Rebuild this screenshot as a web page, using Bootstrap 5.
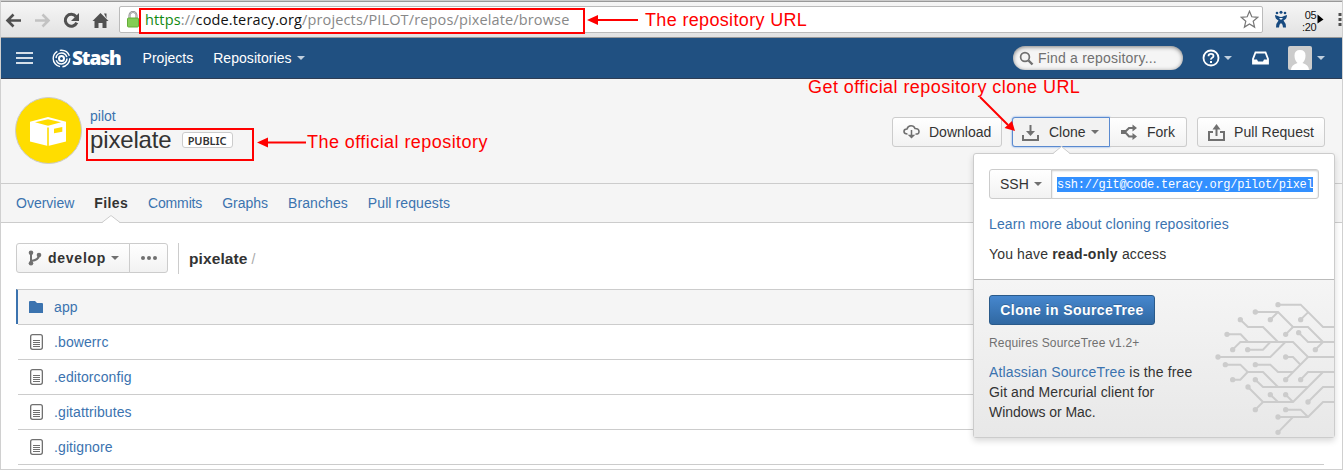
<!DOCTYPE html>
<html lang="en">
<head>
<meta charset="utf-8">
<title>pixelate - Stash</title>
<link href="https://cdn.jsdelivr.net/npm/bootstrap@5.3.0/dist/css/bootstrap.min.css" rel="stylesheet">
<style>
*{box-sizing:border-box}
body{width:1343px;height:470px;overflow:hidden;position:relative;margin:0;background:#fff;color:#333;font:14px/20px "Liberation Sans",Arial,sans-serif;border:solid #d0d0d0;border-width:0 1px 1px}
a{color:#3b73af;text-decoration:none}
svg{display:block;flex:none}
.chrome-bar{height:38px;border-top:1px solid #ccc;border-bottom:1px solid #999;background:linear-gradient(#999 1px,#f6f6f6 1px,#e2e2e2);padding:5px 0 0 4px;overflow:hidden}
.omni{flex:none;width:1144px;height:27px;border:1px solid #bbb;border-radius:2px;background:#fff;margin-left:10px;padding:0 3px 0 7px}
.omni-url{font:14.5px/24px "Open Sans","Noto Sans",sans-serif;color:#888;margin-left:6px;letter-spacing:.14px;white-space:nowrap}
.omni-url b{font-weight:400;color:#111}.omni-url i{font-style:normal;color:#128a12}
.clockx{font:11px/12px "Liberation Sans";color:#111;text-align:right;letter-spacing:-.3px;flex:none}
.stash-nav{height:41px;background:#205081;border-bottom:1px solid #2e3d54;color:#fff;padding:0 17px 0 15px}
.stash-nav a{color:#fff}
.brandword{font:800 19px/24px "Open Sans",sans-serif;letter-spacing:-1.1px}
.caret{width:0;height:0;border:4px solid transparent;border-top-color:#707070;border-bottom:0;flex:none}
.stash-nav .caret{border-top-color:#c0cfde}
.find{width:170px;height:24px;border-radius:12px;background:#f5f5f5;color:#707070;box-shadow:inset 0 1px 4px rgba(0,0,0,.5);padding-left:6px;letter-spacing:.2px}
.repo-head{height:105px;background:#f5f5f5;border-bottom:1px solid #ccc;padding:18px 17px 0 14px}
.avatar-disc{width:67px;height:67px;border-radius:50%;background:#fd0;border:1px solid #ccc;padding:19px 0 0 14px}
.repo-title{font-size:24px;line-height:28px;letter-spacing:-.15px}
.lozenge{font:600 11px/13px "Noto Sans",sans-serif;border:1px solid #ccc;border-radius:3px;background:#fff;padding:1px 0 0;width:51px;height:16px;text-align:center;letter-spacing:-.1px}
.sbtn{height:30px;border:1px solid #ccc;border-radius:3px;background:linear-gradient(#fff,#f2f2f2);color:#333;white-space:nowrap}
.tabs{height:39px;background:#f5f5f5;border-bottom:1px solid #ccc;padding-left:15px;position:relative;letter-spacing:0}
.notch{position:absolute;left:101px;top:31px}
.toolbar-row{height:66px;padding:20px 15px 0}
.tree-row{height:35px;border-top:1px solid #ccc;margin-left:17px;padding-left:12px;letter-spacing:.1px}
.tree-row.active-row{margin-left:15px;border-left:2px solid #3b73af;background:#f5f5f5}
.clonebox{position:absolute;left:972px;top:153px;width:362px;height:285px;border:1px solid #ccc;border-radius:3px;background:#fff;box-shadow:0 3px 6px rgba(0,0,0,.15)}
.clone-up{height:126px;border-bottom:1px solid #bbb;padding:15px}
.clone-low{height:157px;background:linear-gradient(#f5f5f5,#e8e8e8);padding:15px;position:relative}
.sshfield{width:268px;height:30px;border:1px solid #ccc;border-radius:0 3px 3px 0;box-shadow:inset 0 1px 2px #ccc;padding:7px 5px;overflow:hidden;margin-left:-1px}
.sshfield span{display:block;width:256px;height:15px;overflow:hidden;background:#3390ff;color:#fff;font:12px/16px "Liberation Mono",monospace;letter-spacing:-.27px;white-space:nowrap}
.primary-b{width:166px;height:30px;border:1px solid #2a5a8a;border-radius:3px;background:linear-gradient(#4687ce,#3068a2);color:#fff;font-weight:700;line-height:28px;text-align:center;letter-spacing:.42px;text-shadow:0 -1px 0 rgba(0,0,0,.2)}
.note{position:absolute;color:#f00;font-size:18px;line-height:20px;letter-spacing:.44px;white-space:nowrap}
.redbox{position:absolute;border:2px solid #f00}
.arrows{position:absolute;left:-1px;top:0;pointer-events:none}
</style>
<script src="https://cdn.jsdelivr.net/npm/bootstrap@5.3.0/dist/js/bootstrap.bundle.min.js"></script>
</head>
<body>
<svg width="0" height="0" class="position-absolute"><defs>
<g id="doc"><rect x=".65" y=".65" width="11.7" height="14.7" rx="2" fill="#fff" stroke="#707070" stroke-width="1.3"/><path d="M3 6.500h7M3 8.500h7M3 10.500h7M3 12.500h7" stroke="#707070"/></g>
</defs></svg>

<div class="chrome-bar d-flex">
  <svg width="104" height="28" viewBox="5 5 104 28"><g fill="none" stroke="#505050" stroke-width="2.6"><path d="M8 19.5h13M13.5 13.5l-6 6 6 6"/><path d="M35 19.5h13M42.500 13.500l6 6-6 6" stroke="#c2c2c2"/><path d="M76 15.500a6 6 0 1 0 .8 6.200" stroke-width="3"/></g><path d="M79 12v8h-8z" fill="#505050"/><path d="M100.500 12l8 8h-2v7h-4v-5h-4v5h-4v-7h-2zM104 12.500h2.500v5z" fill="#505050"/></svg>
  <div class="omni d-flex align-items-center">
    <svg width="12" height="17" viewBox="0 0 12 17"><path d="M2.500 8V4.500a3.500 3.500 0 0 1 7 0V8" fill="none" stroke="#888" stroke-width="2"/><path d="M2.500 8V4.500a3.500 3.500 0 0 1 7 0V8" fill="none" stroke="#ddd" stroke-width=".7"/><rect x=".5" y="7" width="11" height="9" rx="1" fill="#83cd55" stroke="#65ad3b"/></svg>
    <span class="omni-url"><i>https</i>://<b>code.teracy.org</b>/projects/PILOT/repos/pixelate/browse</span>
    <svg class="ms-auto" width="19" height="19" viewBox="0 0 19 19"><path d="M9.500 1.200l2.300 5.600 6 .5-4.600 3.900 1.400 5.900-5.100-3.200-5.100 3.200 1.400-5.900L1.200 7.300l6-.5z" fill="#fff" stroke="#777" stroke-width="1.2"/></svg>
  </div>
  <svg style="margin:4px 0 0 9px" width="18" height="20" viewBox="0 0 18 20"><g fill="#174a80"><circle cx="5" cy="3" r="1.300"/><circle cx="9" cy="2.200" r="1.500"/><circle cx="13" cy="3" r="1.300"/><path d="M3 5l3 1q3 2 6 0l3-1q0 4-3.500 5.500Q14 13 14 17.500h-3Q11 14 9 13q-2 1-2 4.500H4q0-4.500 2.500-7Q3 9 3 5z"/></g><path d="M7 8h4l-2 2z" fill="#edf3f8"/></svg>
  <div class="clockx" style="margin:3px 0 0 12px">05<br>:20</div>
  <svg width="30" height="28" viewBox="0 0 30 28"><path d="M1.500 8.500l6 5-6 4z" fill="#000"/><path d="M22.500 7h3v3h-3zM22.500 12h3v3h-3zM22.500 17h3v3h-3z" fill="#505050"/></svg>
</div>

<nav class="stash-nav d-flex align-items-center">
  <svg width="17" height="14"><path d="M0 2h17M0 7h17M0 12h17" stroke="#d5dfe9" stroke-width="2"/></svg>
  <svg width="19" height="19" viewBox="0 0 19 19" style="margin-left:19px"><g fill="none" stroke="#fff"><circle cx="9.500" cy="9.500" r="8.300" stroke-width="1.400" stroke-dasharray="12 2.500 20 2.600"/><circle cx="9.500" cy="9.500" r="5.500" stroke-width="1.500" stroke-dasharray="15 2.280"/><circle cx="9.500" cy="9.500" r="2.500" stroke-width="2"/></g></svg>
  <span class="brandword" style="margin-left:1px">Stash</span>
  <a href="#" class="projects" style="margin-left:22px">Projects</a>
  <a href="#" style="margin-left:20px;letter-spacing:.05px">Repositories</a><span class="caret" style="margin-left:5px"></span>
  <div class="find ms-auto d-flex align-items-center"><svg width="15" height="15" viewBox="0 0 15 15" style="margin-right:4px"><path d="M9.500 9.500l4 4" stroke="#707070" stroke-width="2.400"/><circle cx="6" cy="6" r="4.400" fill="none" stroke="#707070" stroke-width="1.700"/></svg>Find a repository...</div>
  <svg width="18" height="18" viewBox="0 0 18 18" style="margin-left:19px"><circle cx="9" cy="9" r="7.500" fill="none" stroke="#fff" stroke-width="1.800"/><path d="M6.500 7.200q0-2.300 2.500-2.300t2.500 2q0 1.200-1.300 1.800T9 10.600" fill="none" stroke="#fff" stroke-width="1.800"/><rect x="8" y="12" width="2" height="2" fill="#fff"/></svg>
  <span class="caret" style="margin-left:4px"></span>
  <svg width="17" height="14" viewBox="0 0 17 14" style="margin-left:20px"><path d="M3.500 1.500h10L16 8v4.500H1V8z" fill="none" stroke="#fff" stroke-width="1.800"/><path d="M1 8.500h4l1 2h5l1-2h4v4H1z" fill="#fff"/></svg>
  <svg width="24" height="24" style="margin-left:19px"><rect width="24" height="24" rx="2" fill="#ccc"/><path d="M3 24q0-5 6.500-7Q6.500 14 6.500 9.500 6.500 4 12 4t5.500 5.500Q17.500 14 14.500 17q6.500 2 6.500 7z" fill="#fff"/></svg>
  <span class="caret" style="margin-left:5px"></span>
</nav>

<header class="repo-head d-flex">
  <div class="avatar-disc"><svg width="37" height="30" viewBox="0 0 37 30"><path d="M0 4.700L18 0l18 4.700v19.800L18 29 0 24.500z" fill="#fff"/><path d="M5 5.300l13-3 13 3-13 3.400z" fill="#fd0"/><path d="M18 10.500v19" stroke="#fd0" stroke-width="1.600"/><path d="M24 11.700l8.300-1.700v4.700L24 16.300z" fill="#fd0"/></svg></div>
  <div style="margin:9px 0 0 8px">
    <a href="#" class="d-block">pilot</a>
    <div class="d-flex align-items-center"><span class="repo-title">pixelate</span><span class="lozenge" style="margin-left:10px">PUBLIC</span></div>
  </div>
  <div class="ms-auto d-flex pt-1" style="margin-top:16px">
    <div class="sbtn d-flex align-items-center" style="width:110px;margin-right:10px;padding-left:10px"><svg width="17" height="16" viewBox="0 0 17 16" style="margin-right:9px"><path d="M4.500 10Q1 10 1 7.500T4 5Q5 1.800 8 1.800T12 4.500Q16 4.500 16 7.500T12.500 10" fill="none" stroke="#707070" stroke-width="1.600"/><path d="M8.500 6v8M6.500 11.500l2 2 2-2z" fill="#707070" stroke="#707070" stroke-width="1.500"/></svg>Download</div>
    <div class="sbtn d-flex align-items-center" style="width:98px;padding-left:9px;border:1px solid #5a8ad0;border-radius:3px 0 0 3px;background:#f2f2f2;box-shadow:0 0 2px #5a90e0"><svg width="17" height="17" viewBox="0 0 17 17" style="margin-right:10px"><path d="M1 11v5h15v-5" fill="none" stroke="#707070" stroke-width="2"/><path d="M8.500 1v8" stroke="#707070" stroke-width="2"/><path d="M4 7h9l-4.500 5z" fill="#707070"/></svg>Clone<span class="caret" style="margin-left:5px"></span></div>
    <div class="sbtn d-flex align-items-center" style="width:77px;margin-right:10px;padding-left:11px;border-left:0;border-radius:0 3px 3px 0"><svg width="17" height="16" viewBox="0 0 17 16" style="margin-right:9px"><path d="M0 6h5v4H0z" fill="#707070"/><path d="M4 8l4-4h4M4 8l4 4.500h4" fill="none" stroke="#707070" stroke-width="2"/><path d="M11.500 .500L16 4l-4.500 3.500zM11.500 9l4.500 3.500-4.500 3.500z" fill="#707070"/></svg>Fork</div>
    <div class="sbtn d-flex align-items-center" style="width:128px;padding-left:10px;letter-spacing:.05px"><svg width="17" height="17" viewBox="0 0 17 17" style="margin-right:9px"><path d="M5 8H1v8h15V8h-4" fill="none" stroke="#707070" stroke-width="2"/><path d="M8.500 12V4" stroke="#707070" stroke-width="2"/><path d="M4.500 5.500h8L8.500 0z" fill="#707070"/></svg>Pull Request</div>
  </div>
</header>
<div class="tabs d-flex align-items-center">
  <a href="#">Overview</a><b style="margin-left:20px;letter-spacing:.35px">Files</b><a href="#" style="margin-left:20px;letter-spacing:-.15px">Commits</a><a href="#" style="margin-left:20px">Graphs</a><a href="#" style="margin-left:20px;letter-spacing:.07px">Branches</a><a href="#" style="margin-left:20px;letter-spacing:.1px">Pull requests</a>
  <svg class="notch" width="18" height="8"><path d="M0 8l9-8 9 8z" fill="#fff"/><path d="M0 7.500L9 .500l9 7" fill="none" stroke="#ccc"/></svg>
</div>
<div class="toolbar-row d-flex">
  <div class="sbtn d-flex align-items-center" style="width:114px;padding-left:11px;border-radius:3px 0 0 3px"><svg width="14" height="16" viewBox="0 0 14 16" style="margin-right:6px"><path d="M3 3v10M3 11q8-1 8-6" fill="none" stroke="#707070" stroke-width="2"/><g fill="#707070"><circle cx="3" cy="2.700" r="2.300"/><circle cx="3" cy="13.200" r="2.300"/><circle cx="11" cy="5" r="2.300"/></g></svg><b style="letter-spacing:.75px">develop</b><span class="caret" style="margin-left:5px"></span></div>
  <div class="sbtn d-flex align-items-center justify-content-center" style="width:39px;margin-left:-1px;border-radius:0 3px 3px 0"><svg width="16" height="4"><g fill="#707070"><circle cx="2" cy="2" r="2"/><circle cx="8" cy="2" r="2"/><circle cx="14" cy="2" r="2"/></g></svg></div>
  <div class="border-start d-flex align-items-center" style="height:31px;margin-left:10px;padding-left:10px;border-color:#ccc!important"><b style="font-size:15.5px;letter-spacing:.1px">pixelate</b><span style="color:#aaa;margin-left:4px">/</span></div>
</div>
<div style="padding-right:18px">
  <div class="tree-row active-row d-flex align-items-center"><svg width="14" height="12" style="margin:0 11px 0 -1px"><path d="M0 1q0-1 1-1h5l2 2h5q1 0 1 1v9H0z" fill="#3b73af"/></svg><a href="#">app</a></div>
  <div class="tree-row d-flex align-items-center"><svg width="13" height="16" style="margin-right:11px"><use href="#doc"/></svg><a href="#">.bowerrc</a></div>
  <div class="tree-row d-flex align-items-center"><svg width="13" height="16" style="margin-right:11px"><use href="#doc"/></svg><a href="#">.editorconfig</a></div>
  <div class="tree-row d-flex align-items-center"><svg width="13" height="16" style="margin-right:11px"><use href="#doc"/></svg><a href="#">.gitattributes</a></div>
  <div class="tree-row d-flex align-items-center"><svg width="13" height="16" style="margin-right:11px"><use href="#doc"/></svg><a href="#">.gitignore</a></div>
  <div style="border-top:1px solid #ccc;margin-left:17px"></div>
</div>

<section class="clonebox">
  <svg class="position-absolute" style="left:79px;top:-8px" width="17" height="8"><path d="M0 8l8.500-8L17 8z" fill="#fff"/><path d="M0 7.500L8.500.500l8.500 7" fill="none" stroke="#ccc"/></svg>
  <div class="clone-up">
    <div class="d-flex"><div class="sbtn d-flex align-items-center" style="width:63px;padding-left:10px;border-radius:3px 0 0 3px">SSH<span class="caret" style="margin-left:5px"></span></div><div class="sshfield"><span>ssh://git@code.teracy.org/pilot/pixel</span></div></div>
    <a href="#" class="d-block learn" style="margin-top:15px;letter-spacing:.13px">Learn more about cloning repositories</a>
    <div style="margin-top:10px;letter-spacing:.15px">You have <b style="letter-spacing:.3px">read-only</b> access</div>
  </div>
  <div class="clone-low">
    <div class="primary-b">Clone in SourceTree</div>
    <div style="font-size:12px;color:#707070;margin-top:9px;line-height:19px;letter-spacing:.15px">Requires SourceTree v1.2+</div>
    <div style="margin-top:9px;width:215px;letter-spacing:.15px"><a href="#">Atlassian SourceTree</a> is the free<br><span style="letter-spacing:.07px">Git and Mercurial client for</span><br><span style="letter-spacing:-.05px">Windows or Mac.</span></div>
    <svg class="position-absolute" style="right:0;top:10px" width="144" height="150" viewBox="0 0 432 450"><path fill="none" stroke="#ccc" stroke-width="6" d="M264 44H332L399 111H434M332 89L354 67M196 66H264L309 111H354L399 156H434M241 89L264 66M287 133L309 111M151 89L174 111H219L264 156M326 128L354 156H399M376 179L399 156M111 133H152L174 156M128 179L151 156H309L354 201H434M173 179H219L241 156M84 201H241L286 156M287 201H309L331 224M287 269L354 201M106 224H151L173 246H219L264 291M128 269H151L173 246M196 224H241L264 246H309M196 269L219 291H354M332 269L354 246H434M174 291L219 336H309L399 246M196 359L219 336M241 314L264 336M287 314L309 336M354 336L399 291H434M287 359H332L354 381M264 381H354L399 336H434M264 427L309 381"/><path stroke="#ccc" stroke-width="16" stroke-linecap="round" d="M264 44h0M332 89h0M196 66h0M241 89h0M287 133h0M151 89h0M326 128h0M376 179h0M111 133h0M128 179h0M173 179h0M84 201h0M287 201h0M287 269h0M106 224h0M128 269h0M196 224h0M196 269h0M332 269h0M174 291h0M196 359h0M241 314h0M287 314h0M354 336h0M287 359h0M264 381h0M264 427h0"/></svg>
  </div>
</section>

<div class="redbox" style="left:138px;top:8px;width:446px;height:26px"></div>
<div class="redbox" style="left:85px;top:128px;width:168px;height:33px"></div>
<div class="note" style="left:644px;top:10px;letter-spacing:.34px">The repository URL</div>
<div class="note" style="left:306px;top:132px">The official repository</div>
<div class="note" style="left:807px;top:77px">Get official repository clone URL</div>
<svg class="arrows" width="1343" height="170"><g stroke="#f00" stroke-width="2"><path d="M595 20h43M265 142.500h41M980 97l28 28"/></g><path fill="#f00" d="M587 20l11-5v10zM257 142.500l11-5v10zM1015 131l-10.500-3 7.500-7z"/></svg>
</body>
</html>
